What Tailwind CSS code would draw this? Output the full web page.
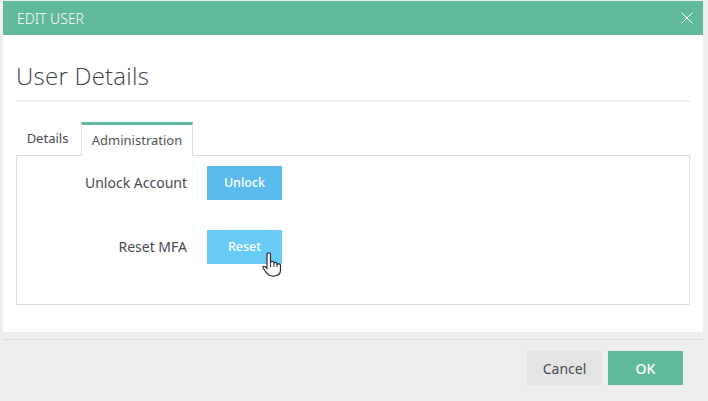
<!DOCTYPE html>
<html lang="en">
<head>
  <meta charset="UTF-8">
  <title>Edit User</title>
  <script src="https://cdn.jsdelivr.net/npm/@tailwindcss/browser@4"></script>
</head>
<body class="bg-[#ededed] h-[401px] w-[708px] overflow-hidden font-['Noto_Sans',sans-serif]">
  <div class="pt-px pl-[3px] w-[703px]">
    <div class="bg-white h-[331px]">
      <div class="h-[34px] bg-[#60b99a] flex items-center justify-between pl-[14px] pr-[10px]">
        <span class="text-white text-[14px] font-light">EDIT USER</span>
        <svg width="12" height="12" viewBox="0 0 12 12"><path d="M0.5 0.5L11.5 11.5M11.5 0.5L0.5 11.5" stroke="#fff" stroke-width="1" fill="none"/></svg>
      </div>
      <div class="px-[13px]">
        <div class="h-[67px] border-b-2 border-[#f0f0f0] flex items-center">
          <h1 class="text-[24px] font-light text-[#3d3f4e] pt-[16px] font-['Open_Sans',sans-serif] tracking-[0.25px]">User Details</h1>
        </div>
        <div class="flex h-[34px] mt-[20px] relative z-10">
          <div class="w-[65px] pr-[2px] flex items-center justify-center text-[13px] text-[#4a4a55]">Details</div>
          <div class="w-[112px] h-[34px] bg-white border-x border-[#ddd] border-t-[3px] border-t-[#60b99a] flex items-center justify-center text-[13px] text-[#555]">Administration</div>
        </div>
        <div class="h-[150px] -mt-px border border-[#ddd] relative">
          <div class="flex items-center h-[34px] mt-[10px]">
            <span class="w-[170px] pb-[2px] text-right text-[14px] text-[#4a4a55]">Unlock Account</span>
            <button class="ml-[20px] w-[75px] h-[34px] bg-[#5bbbed] text-white text-[12.5px] font-medium">Unlock</button>
          </div>
          <div class="flex items-center h-[34px] mt-[30px]">
            <span class="w-[170px] pb-[2px] text-right text-[14px] text-[#4a4a55]">Reset MFA</span>
            <button class="ml-[20px] w-[75px] h-[34px] bg-[#69cbf8] text-white text-[12.5px] font-medium">Reset</button>
          </div>
          <svg class="absolute left-[245px] top-[96px]" width="20" height="25" viewBox="0 0 20 25">
            <path d="M5 2C5 0.5 8.5 0.5 8.5 2V10.5C9 9 11.5 9 12 10.5V11.5C12.5 10 14.500 10 15 11.5V12.5C15.500 11.500 18 11.500 18.500 13V18C18.500 20.500 17 23.500 12.500 24C8 24.500 5 22 3.500 19.500L1 16C0.5 14.500 2 13.500 3.500 15L5 16.500Z" fill="#fff" stroke="#2b2b38" stroke-width="1.2" stroke-linejoin="round"/>
            <path d="M8.5 10.500V15M12 11.500V15M15 12.500V15" stroke="#2b2b38" stroke-width="1"/>
          </svg>
        </div>
      </div>
    </div>
    <div class="h-px bg-[#dcdcdc] mt-[7px]"></div>
    <div class="flex justify-end gap-[6px] pr-[20px] mt-[11px]">
      <button class="w-[75px] h-[34px] bg-[#e4e4e4] text-[#4a4a55] text-[14px]">Cancel</button>
      <button class="w-[75px] h-[34px] bg-[#60b99a] text-white text-[14px] font-medium">OK</button>
    </div>
  </div>
</body>
</html>
